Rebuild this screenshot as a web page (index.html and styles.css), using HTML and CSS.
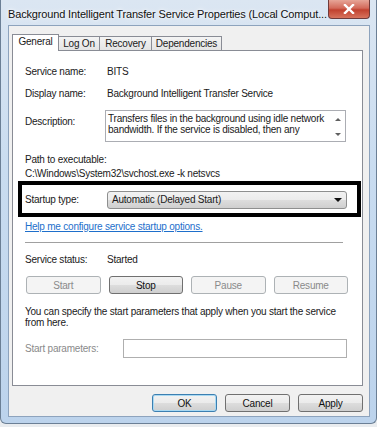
FILE: index.html
```html
<!DOCTYPE html>
<html lang="en">
<head>
    <meta charset="UTF-8">
    <title>Background Intelligent Transfer Service Properties</title>
    <link rel="stylesheet" href="styles.css">
</head>
<body>
    <div class="window">
        <div class="titlebar">
            <span class="title">Background Intelligent Transfer Service Properties (Local Comput...</span>
            <div class="close-btn">
                <svg width="12" height="10" viewBox="0 0 12 10">
                    <path d="M2 1 L10 9 M10 1 L2 9" stroke="#fff" stroke-width="2.4" stroke-linecap="square"/>
                </svg>
            </div>
        </div>

        <div class="client">
            <div class="tabs">
                <div class="tab active">General</div>
                <div class="tab tab-logon">Log On</div>
                <div class="tab tab-recovery">Recovery</div>
                <div class="tab tab-deps">Dependencies</div>
            </div>

            <div class="panel">
                <div class="row">
                    <span class="label">Service name:</span>
                    <span>BITS</span>
                </div>
                <div class="row gap-8">
                    <span class="label">Display name:</span>
                    <span>Background Intelligent Transfer Service</span>
                </div>
                <div class="row desc-row">
                    <span class="label desc-label">Description:</span>
                    <div class="textbox">
                        <div class="textbox-text">Transfers files in the background using idle network bandwidth. If the service is disabled, then any</div>
                        <div class="scroll">
                            <span class="arrow-up"></span>
                            <span class="arrow-down small"></span>
                        </div>
                    </div>
                </div>

                <div class="path-label">Path to executable:</div>
                <div class="path">C:\Windows\System32\svchost.exe -k netsvcs</div>

                <div class="highlight">
                    <span class="label">Startup type:</span>
                    <div class="select">
                        <span>Automatic (Delayed Start)</span>
                        <span class="arrow-down"></span>
                    </div>
                </div>

                <a class="help-link" href="#">Help me configure service startup options.</a>

                <div class="separator"></div>

                <div class="row status-row">
                    <span class="label">Service status:</span>
                    <span>Started</span>
                </div>

                <div class="service-buttons">
                    <div class="btn disabled">Start</div>
                    <div class="btn">Stop</div>
                    <div class="btn disabled">Pause</div>
                    <div class="btn disabled">Resume</div>
                </div>

                <p class="hint">You can specify the start parameters that apply when you start the service from here.</p>

                <div class="params-row">
                    <span class="params-label">Start parameters:</span>
                    <div class="params-input"></div>
                </div>
            </div>

            <div class="dialog-buttons">
                <div class="btn default">OK</div>
                <div class="btn">Cancel</div>
                <div class="btn">Apply</div>
            </div>
        </div>
    </div>
</body>
</html>
```

FILE: styles.css
```css
* {
    margin: 0;
    padding: 0;
    box-sizing: border-box;
}

body {
    width: 377px;
    height: 427px;
    background: #e9ecef;
    font-family: "Liberation Sans", Arial, sans-serif;
    font-size: 10px;
    letter-spacing: -0.22px;
    color: #1a1a1a;
    overflow: hidden;
}

.window {
    width: 377px;
    height: 424px;
    display: flex;
    flex-direction: column;
    padding: 0 6px 6px 7px;
    background: linear-gradient(180deg, #dbe6f2 0%, #c9dcf0 40%, #bcd3ec 100%);
    border: 1px solid #6b7f95;
    border-top: none;
    border-radius: 0 0 6px 6px;
}

.titlebar {
    height: 25px;
    flex-shrink: 0;
    display: flex;
    align-items: center;
    justify-content: space-between;
}

.title {
    font-size: 11px;
    letter-spacing: -0.15px;
    color: #111;
    margin-top: 2px;
    white-space: nowrap;
    text-shadow: 0 0 6px #fff, 0 0 3px #fff;
}

.close-btn {
    width: 42px;
    height: 19px;
    flex-shrink: 0;
    align-self: flex-start;
    display: flex;
    align-items: center;
    justify-content: center;
    border: 1px solid #6f3a3a;
    border-top: none;
    border-radius: 0 0 4px 4px;
    background: linear-gradient(180deg, #e7a597 0%, #d36a5a 45%, #c1412f 55%, #d7735d 100%);
}

.client {
    flex: 1;
    display: flex;
    flex-direction: column;
    background: #f0f0f0;
    border: 1px solid #8da3bd;
    padding: 7px 6px 0 3px;
}

.tabs {
    display: flex;
    align-items: flex-end;
    height: 17px;
    position: relative;
    z-index: 1;
}

.tab {
    height: 14px;
    display: flex;
    align-items: center;
    justify-content: center;
    border: 1px solid #898c95;
    border-bottom: none;
    border-left: none;
    background: linear-gradient(180deg, #f4f4f4 0%, #e4e4e4 100%);
    line-height: 1;
}

.tab.active {
    height: 17px;
    width: 47px;
    border-left: 1px solid #898c95;
    background: #fff;
    padding-bottom: 2px;
    margin-bottom: -1px;
}

.tab-logon {
    width: 41px;
}

.tab-recovery {
    width: 52px;
}

.tab-deps {
    width: 70px;
}

.panel {
    height: 336px;
    flex-shrink: 0;
    background: #fff;
    border: 1px solid #898c95;
    padding: 14px 15px 0 12px;
    display: flex;
    flex-direction: column;
}

.row {
    display: flex;
    line-height: 14px;
}

.label {
    width: 82px;
    flex-shrink: 0;
}

.gap-8 {
    margin-top: 8px;
}

.desc-row {
    margin-top: 9px;
}

.desc-label {
    padding-top: 5px;
}

.textbox {
    width: 241px;
    height: 32px;
    margin-left: -2px;
    border: 1px solid #abadb3;
    display: flex;
    padding: 1px 2px 0 2px;
}

.textbox-text {
    flex: 1;
    line-height: 11px;
    padding-top: 1px;
}

.scroll {
    width: 10px;
    display: flex;
    flex-direction: column;
    align-items: center;
    justify-content: space-between;
    padding: 6px 0 5px 0;
}

.arrow-up {
    width: 0;
    height: 0;
    border-left: 3px solid transparent;
    border-right: 3px solid transparent;
    border-bottom: 3px solid #606060;
}

.arrow-down {
    width: 0;
    height: 0;
    border-left: 4px solid transparent;
    border-right: 4px solid transparent;
    border-top: 4px solid #111;
}

.arrow-down.small {
    border-left-width: 3px;
    border-right-width: 3px;
    border-top: 3px solid #606060;
}

.path-label {
    margin-top: 11px;
    line-height: 14px;
}

.path {
    line-height: 14px;
}

.highlight {
    display: flex;
    align-items: center;
    height: 36px;
    margin: 0 -14px 0 -7px;
    border: 4px solid #000;
    padding: 1px 0 0 3px;
}

.select {
    width: 240px;
    height: 18px;
    display: flex;
    align-items: center;
    justify-content: space-between;
    padding: 0 4px 0 4px;
    border: 1px solid #8e8f8f;
    border-radius: 3px;
    background: linear-gradient(180deg, #f2f2f2 0%, #ebebeb 50%, #dddddd 51%, #cfcfcf 100%);
}

.help-link {
    margin-top: 3px;
    line-height: 14px;
    color: #1e6fcb;
    align-self: flex-start;
}

.separator {
    margin-top: 8px;
    height: 1px;
    width: 318px;
    background: #a0a0a0;
}

.status-row {
    margin-top: 10px;
}

.service-buttons {
    margin-top: 9px;
    display: grid;
    grid-template-columns: repeat(4, 1fr);
    column-gap: 8px;
    width: 322px;
    margin-left: 1px;
}

.btn {
    height: 18px;
    display: flex;
    align-items: center;
    justify-content: center;
    border: 1px solid #707070;
    border-radius: 3px;
    background: linear-gradient(180deg, #f2f2f2 0%, #ebebeb 50%, #dddddd 51%, #cfcfcf 100%);
    color: #111;
}

.btn.disabled {
    border-color: #adb2b5;
    background: #f4f4f4;
    color: #8a8a8a;
}

.btn.default {
    border-color: #3c7fb1;
    box-shadow: inset 0 0 0 1px #a9d9f2;
}

.hint {
    margin-top: 12px;
    line-height: 11px;
    width: 320px;
}

.params-row {
    margin-top: 11px;
    display: flex;
    align-items: center;
}

.params-label {
    width: 98px;
    color: #8a8a8a;
}

.params-input {
    width: 224px;
    height: 19px;
    border: 1px solid #afafaf;
    background: #fff;
}

.dialog-buttons {
    display: flex;
    justify-content: flex-end;
    gap: 8px;
    margin-top: 8px;
}

.dialog-buttons .btn {
    width: 65px;
}
```
